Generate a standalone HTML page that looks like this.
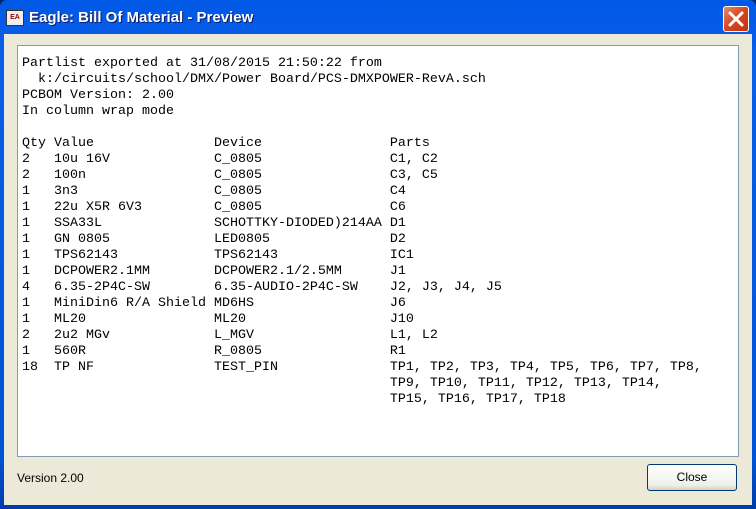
<!DOCTYPE html>
<html><head><style>
body{margin:0;width:756px;height:509px;overflow:hidden;background:#0a246a;font-family:"Liberation Sans",sans-serif}
.win{position:absolute;left:0;top:0;width:756px;height:509px;background:linear-gradient(#0058e6,#0a5ee8 10%,#0053d6 90%,#003ca8);border-radius:7px 7px 0 0}
.title{position:absolute;left:29px;top:9px;color:#fff;font-weight:bold;font-size:15px;text-shadow:1px 1px #0a1e6a}
.icon{position:absolute;left:6px;top:10px;width:16px;height:14px;background:#eee;border:1px solid #333;font-size:7px;line-height:14px;text-align:center;color:#900;font-weight:bold}
.x{position:absolute;left:723px;top:6px;width:26px;height:26px;background:linear-gradient(135deg,#e88a6a,#d4461f 50%,#c0330f);border:1px solid #fff;border-radius:3px;box-sizing:border-box}
.client{position:absolute;left:4px;top:34px;width:748px;height:471px;background:#ece9d8}
.box{position:absolute;left:17px;top:45px;width:720px;height:410px;background:#fff;border:1px solid #7f9db9}
pre{margin:0;position:absolute;left:4px;top:10px;font-family:"Liberation Mono",monospace;font-size:13.33px;line-height:16px;color:#000}
.ver{position:absolute;left:17px;top:471px;font-size:12px;color:#000}
.btn{position:absolute;left:647px;top:464px;width:88px;height:25px;border:1px solid #003c74;border-radius:3px;background:linear-gradient(#fff,#f0f0ea 80%,#d6d0c5);font-size:12px;text-align:center;line-height:25px}
</style></head><body>
<div class="win">
<div class="icon">EA</div>
<div class="title">Eagle: Bill Of Material - Preview</div>
<div class="x"><svg width="24" height="24" viewBox="0 0 24 24" style="position:absolute;left:0;top:0"><path d="M6 6L18 18M18 6L6 18" stroke="#fff" stroke-width="3" stroke-linecap="round"/></svg></div>
<div class="client"></div>
<div class="box"><pre>Partlist exported at 31/08/2015 21:50:22 from
  k:/circuits/school/DMX/Power Board/PCS-DMXPOWER-RevA.sch
PCBOM Version: 2.00
In column wrap mode

Qty Value               Device                Parts
2   10u 16V             C_0805                C1, C2
2   100n                C_0805                C3, C5
1   3n3                 C_0805                C4
1   22u X5R 6V3         C_0805                C6
1   SSA33L              SCHOTTKY-DIODED)214AA D1
1   GN 0805             LED0805               D2
1   TPS62143            TPS62143              IC1
1   DCPOWER2.1MM        DCPOWER2.1/2.5MM      J1
4   6.35-2P4C-SW        6.35-AUDIO-2P4C-SW    J2, J3, J4, J5
1   MiniDin6 R/A Shield MD6HS                 J6
1   ML20                ML20                  J10
2   2u2 MGv             L_MGV                 L1, L2
1   560R                R_0805                R1
18  TP NF               TEST_PIN              TP1, TP2, TP3, TP4, TP5, TP6, TP7, TP8,
                                              TP9, TP10, TP11, TP12, TP13, TP14,
                                              TP15, TP16, TP17, TP18</pre></div>
<div class="ver">Version 2.00</div>
<div class="btn">Close</div>
</div>
</body></html>
